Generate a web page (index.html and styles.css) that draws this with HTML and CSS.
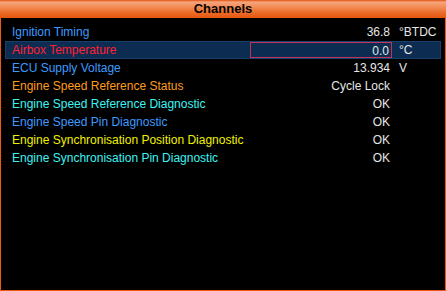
FILE: index.html
```html
<!DOCTYPE html>
<html>
<head>
<meta charset="utf-8">
<link rel="stylesheet" href="styles.css">
</head>
<body>
<div class="window">
  <div class="titlebar">Channels</div>
  <div class="list">
    <div class="row"><span class="name c-blue">Ignition Timing</span><span class="val">36.8</span><span class="unit">°BTDC</span></div>
    <div class="row selected"><span class="name c-red">Airbox Temperature</span><span class="val editing">0.0</span><span class="unit">°C</span></div>
    <div class="row"><span class="name c-blue">ECU Supply Voltage</span><span class="val">13.934</span><span class="unit">V</span></div>
    <div class="row"><span class="name c-orange">Engine Speed Reference Status</span><span class="val">Cycle Lock</span><span class="unit"></span></div>
    <div class="row"><span class="name c-cyan">Engine Speed Reference Diagnostic</span><span class="val">OK</span><span class="unit"></span></div>
    <div class="row"><span class="name c-blue">Engine Speed Pin Diagnostic</span><span class="val">OK</span><span class="unit"></span></div>
    <div class="row"><span class="name c-yellow">Engine Synchronisation Position Diagnostic</span><span class="val">OK</span><span class="unit"></span></div>
    <div class="row"><span class="name c-cyan">Engine Synchronisation Pin Diagnostic</span><span class="val">OK</span><span class="unit"></span></div>
  </div>
</div>
</body>
</html>
```

FILE: styles.css
```css
html, body {
  margin: 0;
  padding: 0;
  background: #000;
}
.window {
  width: 446px;
  height: 291px;
  box-sizing: border-box;
  border: 1px solid #f05a10;
  border-top: none;
  background: #000;
  display: flex;
  flex-direction: column;
  font-family: "Liberation Sans", Arial, sans-serif;
  font-size: 12px;
}
.titlebar {
  height: 18px;
  margin: 0 -1px;
  line-height: 18px;
  text-align: center;
  font-weight: bold;
  font-size: 13px;
  color: #000;
  background: linear-gradient(#e0500c 0px, #f6a57e 2px, #f38c55 7px, #ea6a25 13px, #e6560f 18px);
}
.list {
  padding: 5px 4px 0 4px;
  display: flex;
  flex-direction: column;
}
.row {
  display: grid;
  grid-template-columns: 1fr 142px 48px;
  height: 18px;
  box-sizing: border-box;
  align-items: center;
  padding-left: 6px;
  border: 1px solid transparent;
}
.row.selected {
  background: #0c2c52;
  border-color: #173f6c;
}
.name {
  white-space: nowrap;
}
.val {
  color: #e6e6e6;
  text-align: right;
  padding-right: 2px;
  white-space: nowrap;
}
.val.editing {
  border: 1px solid #c2325e;
  height: 16px;
  line-height: 16px;
  box-sizing: border-box;
  margin-top: -1px;
}
.unit {
  color: #e6e6e6;
  padding-left: 7px;
  white-space: nowrap;
}
.c-blue { color: #3d9bff; }
.c-red { color: #ff2030; }
.c-orange { color: #ff9c1a; }
.c-cyan { color: #3ef2f2; }
.c-yellow { color: #f0f000; }
```
